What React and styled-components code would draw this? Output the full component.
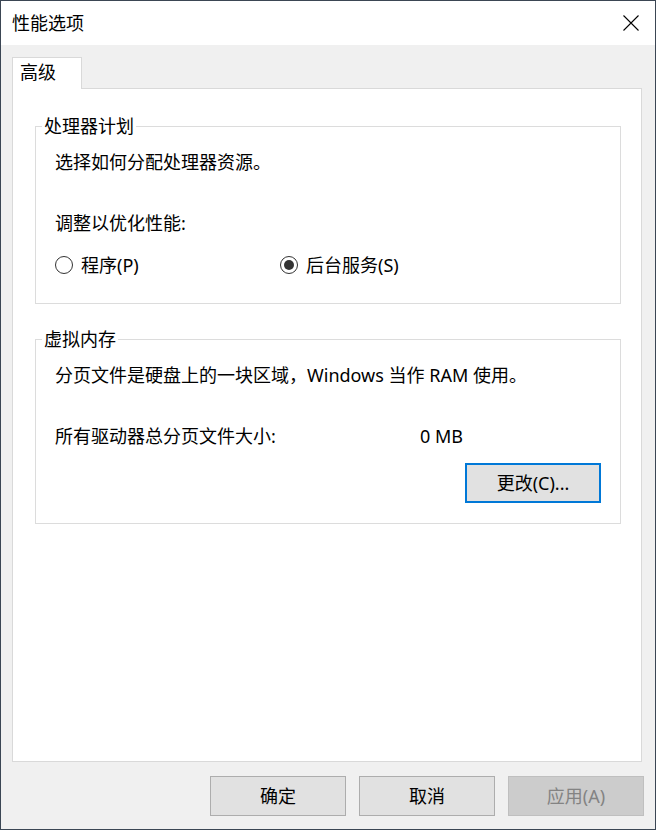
import React from "react";
import styled, { createGlobalStyle } from "styled-components";

const GlobalStyle = createGlobalStyle`
  html, body {
    margin: 0;
    padding: 0;
    background: #ffffff;
  }
  body {
    font-family: "Noto Sans", "Noto Sans CJK SC", sans-serif;
    font-size: 18px;
    color: #000;
  }
  * {
    box-sizing: border-box;
  }
`;

const Window = styled.div`
  width: 656px;
  height: 830px;
  display: flex;
  flex-direction: column;
  border: 1px solid #3b4654;
  background: #f0f0f0;
`;

const TitleBar = styled.div`
  height: 44px;
  flex: none;
  display: flex;
  align-items: center;
  justify-content: space-between;
  padding: 0 16px 0 11px;
  background: #fff;
  font-size: 18px;
  line-height: 24px;
`;

const CloseIcon = styled.svg`
  width: 16px;
  height: 16px;
  display: block;
`;

const Body = styled.div`
  flex: 1;
  display: flex;
  flex-direction: column;
  padding: 12px 13px 13px 11px;
`;

const TabStrip = styled.div`
  display: flex;
`;

const Tab = styled.div`
  position: relative;
  z-index: 1;
  width: 70px;
  height: 32px;
  margin-bottom: -1px;
  padding: 2px 0 0 7px;
  background: #fff;
  border: 1px solid #d9d9d9;
  border-bottom: none;
  line-height: 24px;
`;

const Panel = styled.div`
  flex: 1;
  display: flex;
  flex-direction: column;
  padding: 0 20px 0 22px;
  background: #fff;
  border: 1px solid #d9d9d9;
`;

const GroupBox = styled.fieldset`
  margin: ${(p) => p.$top}px 0 0 0;
  padding: 0;
  min-inline-size: 0;
  border: 1px solid #dcdcdc;
`;

const Legend = styled.legend`
  margin-left: 6px;
  padding: 0 2px;
  line-height: 24px;
  font-size: 18px;
`;

const GroupBody = styled.div`
  display: flex;
  flex-direction: column;
  padding: 12px 19px ${(p) => p.$bottom}px 19px;
`;

const Line = styled.div`
  line-height: 24px;
  margin-top: ${(p) => p.$gap || 0}px;
  white-space: nowrap;
`;

const SizeRow = styled.div`
  display: grid;
  grid-template-columns: 365px auto;
  line-height: 24px;
  margin-top: 37px;
`;

const RadioRow = styled.div`
  display: flex;
  margin-top: 18px;
`;

const RadioItem = styled.label`
  display: flex;
  align-items: center;
  gap: 8px;
  width: 225px;
  line-height: 24px;
`;

const RadioCircle = styled.span`
  width: 18px;
  height: 18px;
  border-radius: 50%;
  border: 1px solid #333;
  background: #fff;
  display: flex;
  align-items: center;
  justify-content: center;

  &::after {
    content: "";
    width: 10px;
    height: 10px;
    border-radius: 50%;
    background: ${(p) => (p.$checked ? "#333" : "transparent")};
  }
`;

const ButtonRight = styled.div`
  display: flex;
  justify-content: flex-end;
  margin-top: 15px;
`;

const Button = styled.button`
  width: 136px;
  height: 40px;
  padding: 0;
  font-family: inherit;
  font-size: 18px;
  line-height: 24px;
  color: ${(p) => (p.disabled ? "#838383" : "#000")};
  background: ${(p) => (p.disabled ? "#cccccc" : "#e1e1e1")};
  border: ${(p) =>
    p.$focused
      ? "2px solid #0078d7"
      : p.disabled
      ? "1px solid #bfbfbf"
      : "1px solid #adadad"};
`;

const Footer = styled.div`
  display: flex;
  justify-content: flex-end;
  gap: 13px;
  margin-top: 14px;
  margin-right: -2px;
`;

function Radio({ checked, children }) {
  return (
    <RadioItem>
      <RadioCircle $checked={checked} />
      <span>{children}</span>
    </RadioItem>
  );
}

export default function App() {
  return (
    <>
      <GlobalStyle />
      <Window>
        <TitleBar>
          <span>性能选项</span>
          <CloseIcon viewBox="0 0 16 16">
            <path d="M0.5 0.5 L15.5 15.5 M15.5 0.5 L0.5 15.5" stroke="#000" strokeWidth="1.1" fill="none" />
          </CloseIcon>
        </TitleBar>
        <Body>
          <TabStrip>
            <Tab>高级</Tab>
          </TabStrip>
          <Panel>
            <GroupBox $top={25}>
              <Legend>处理器计划</Legend>
              <GroupBody $bottom={26}>
                <Line>选择如何分配处理器资源。</Line>
                <Line $gap={37}>调整以优化性能:</Line>
                <RadioRow>
                  <Radio>程序(P)</Radio>
                  <Radio checked>后台服务(S)</Radio>
                </RadioRow>
              </GroupBody>
            </GroupBox>
            <GroupBox $top={23}>
              <Legend>虚拟内存</Legend>
              <GroupBody $bottom={20}>
                <Line>分页文件是硬盘上的一块区域，Windows 当作 RAM 使用。</Line>
                <SizeRow>
                  <span>所有驱动器总分页文件大小:</span>
                  <span>0 MB</span>
                </SizeRow>
                <ButtonRight>
                  <Button $focused>更改(C)...</Button>
                </ButtonRight>
              </GroupBody>
            </GroupBox>
          </Panel>
          <Footer>
            <Button>确定</Button>
            <Button>取消</Button>
            <Button disabled>应用(A)</Button>
          </Footer>
        </Body>
      </Window>
    </>
  );
}
